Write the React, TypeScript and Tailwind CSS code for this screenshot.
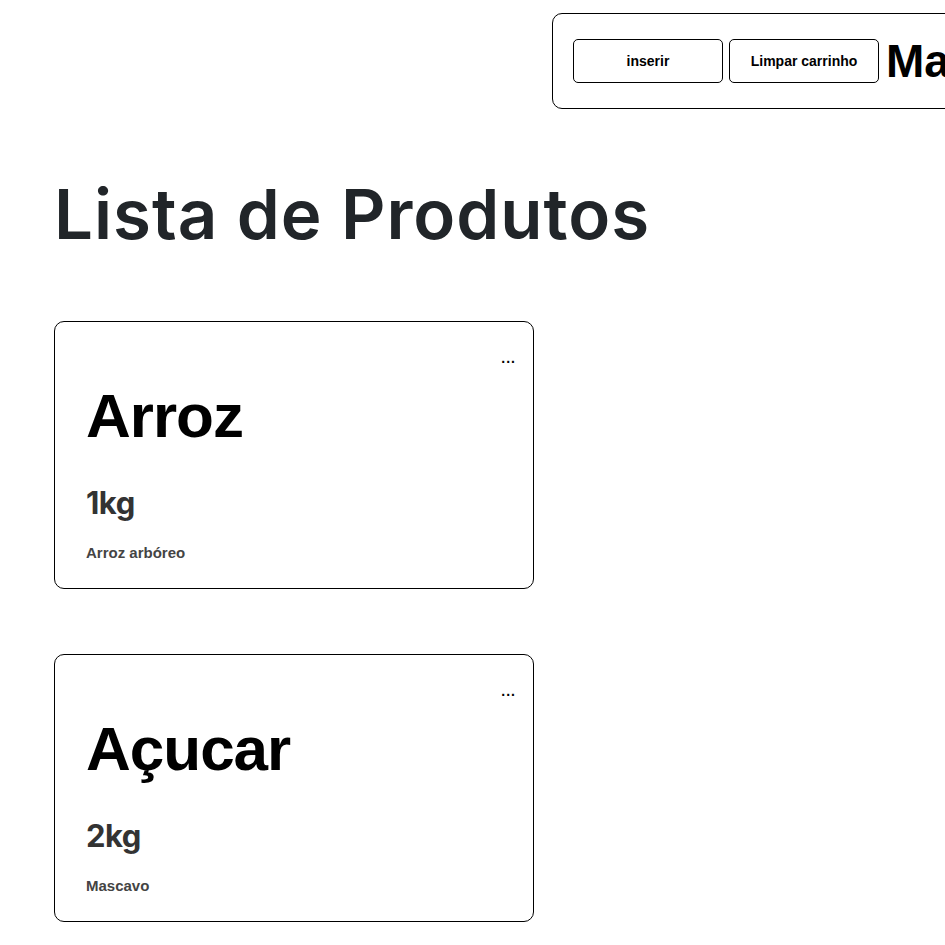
import React from "react";

const products = [
  { name: "Arroz", qty: "1kg", desc: "Arroz arbóreo" },
  { name: "Açucar", qty: "2kg", desc: "Mascavo" },
];

export default function App() {
  return (
    <div className="w-[945px] h-[945px] overflow-hidden bg-white">
      <div className="pt-[13px] pl-[552px] w-[1400px]">
        <div className="flex items-center gap-[6px] border border-black rounded-[10px] h-[96px] pl-[20px] w-[600px]">
          <button className="w-[150px] h-[44px] border border-black rounded-[5px] bg-white text-[14px] font-bold text-black font-['Liberation_Sans',Arial,sans-serif]">
            inserir
          </button>
          <button className="w-[150px] h-[44px] border border-black rounded-[5px] bg-white text-[14px] font-bold text-black font-['Liberation_Sans',Arial,sans-serif]">
            Limpar carrinho
          </button>
          <span className="ml-[1px] text-[46px] font-bold text-black leading-none whitespace-nowrap font-['Liberation_Sans',Arial,sans-serif]">
            Mais
          </span>
        </div>
      </div>
      <div className="pl-[54px]">
        <h1 className="mt-[71px] text-[69px] font-semibold text-[#212529] leading-none tracking-[1px] font-['Inter',sans-serif]">
          Lista de Produtos
        </h1>
        <div className="mt-[72px] flex flex-col gap-[65px]">
          {products.map((p) => (
            <div
              key={p.name}
              className="relative w-[480px] h-[268px] border border-black rounded-[10px] pl-[31px] pt-[63px]"
            >
              <span className="absolute right-[17px] top-[29px] text-[14px] font-bold text-black leading-none tracking-[1px] font-['Liberation_Sans',Arial,sans-serif]">
                ...
              </span>
              <div className="text-[62px] font-bold text-black leading-none tracking-[-1px] font-['Liberation_Sans',Arial,sans-serif]">
                {p.name}
              </div>
              <div className="mt-[40px] text-[31px] font-bold text-[#333] leading-none tracking-[-0.5px] font-['Inter',sans-serif]">
                {p.qty}
              </div>
              <div className="mt-[27px] text-[15px] font-bold text-[#444] leading-none font-['Liberation_Sans',Arial,sans-serif]">
                {p.desc}
              </div>
            </div>
          ))}
        </div>
      </div>
    </div>
  );
}
